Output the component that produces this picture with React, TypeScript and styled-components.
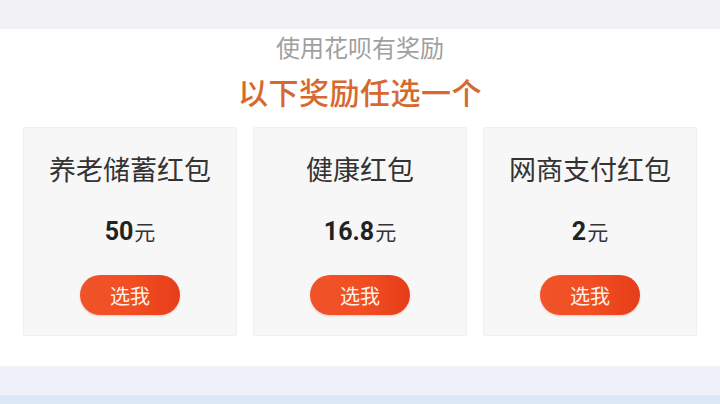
import styled, { createGlobalStyle } from "styled-components"

const GlobalStyle = createGlobalStyle`
  html, body {
    margin: 0;
    padding: 0;
    background: #f2f2f4;
  }

  body {
    font-family: "Noto Sans CJK SC", "Noto Sans", sans-serif;
  }
`

const Page = styled.div`
  display: flex;
  flex-direction: column;
  height: 404px;
  overflow: hidden;
`

const TopBand = styled.div`
  background: #f2f2f4;
  height: 29px;
  flex-shrink: 0;
`

const Panel = styled.section`
  background: #fff;
  display: flex;
  flex-direction: column;
  align-items: center;
  padding: 1px 23px 30px;
`

const Subtitle = styled.p`
  color: #a0a0a0;
  font-size: 24px;
  line-height: 34px;
  margin: 0;
`

const Heading = styled.h2`
  color: #d6692f;
  font-size: 30px;
  font-weight: 500;
  line-height: 40px;
  margin: 7px 0 0;
  letter-spacing: 0.5px;
`

const CardRow = styled.div`
  display: grid;
  grid-template-columns: repeat(3, 1fr);
  gap: 16px;
  margin-top: 16px;
  width: 100%;
`

const Card = styled.div`
  background: #f7f7f8;
  border: 1px solid #efeff1;
  border-radius: 2px;
  display: flex;
  flex-direction: column;
  align-items: center;
  padding: 23px 0 20px;
`

const CardTitle = styled.h3`
  color: #333;
  font-size: 27px;
  font-weight: 400;
  line-height: 36px;
  margin: 0;
`

const Amount = styled.p`
  color: #222;
  font-family: "Roboto", "Noto Sans CJK SC", sans-serif;
  font-size: 25px;
  font-weight: 700;
  line-height: 30px;
  margin: 29px 0 0;

  span {
    font-family: "Noto Sans CJK SC", sans-serif;
    font-size: 21px;
    font-weight: 400;
    color: #333;
    margin-left: 1px;
  }
`

const PickButton = styled.button`
  background: linear-gradient(90deg, #f0532a 0%, #f24f22 50%, #e63d1a 100%);
  border: none;
  border-radius: 20px;
  box-shadow: 0 1px 2px rgba(200, 60, 20, 0.25);
  color: #fff2ea;
  cursor: pointer;
  font-family: "Noto Sans CJK SC", sans-serif;
  font-size: 20px;
  height: 40px;
  margin-top: 28px;
  width: 100px;
`

const GreyBand = styled.div`
  background: #eff1f8;
  height: 29px;
  flex-shrink: 0;
`

const BlueBand = styled.div`
  background: #dde8f7;
  flex: 1;
`

interface Reward {
  name: string
  amount: string
}

const rewards: Reward[] = [
  { name: "养老储蓄红包", amount: "50" },
  { name: "健康红包", amount: "16.8" },
  { name: "网商支付红包", amount: "2" },
]

const RewardCard = ({ reward }: { reward: Reward }) => (
  <Card>
    <CardTitle>{reward.name}</CardTitle>
    <Amount>
      {reward.amount}
      <span>元</span>
    </Amount>
    <PickButton>选我</PickButton>
  </Card>
)

export default function App() {
  return (
    <Page>
      <GlobalStyle />
      <TopBand />
      <Panel>
        <Subtitle>使用花呗有奖励</Subtitle>
        <Heading>以下奖励任选一个</Heading>
        <CardRow>
          {rewards.map((reward) => (
            <RewardCard key={reward.name} reward={reward} />
          ))}
        </CardRow>
      </Panel>
      <GreyBand />
      <BlueBand />
    </Page>
  )
}
